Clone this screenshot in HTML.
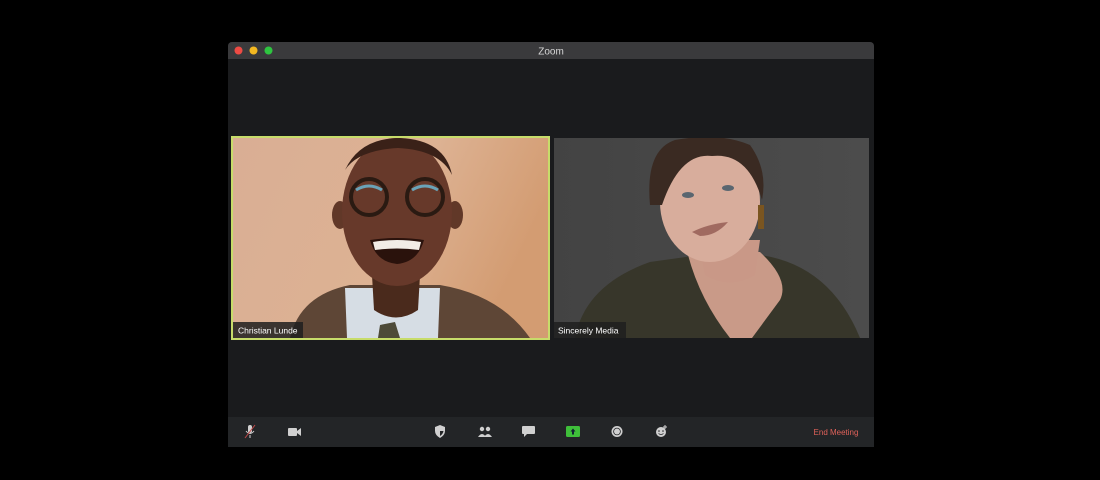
<!DOCTYPE html>
<html><head><meta charset="utf-8"><style>
html,body{margin:0;padding:0;background:#000;width:1100px;height:480px;overflow:hidden;font-family:"Liberation Sans",sans-serif}
</style></head><body>
<svg width="1100" height="480" viewBox="0 0 1100 480" xmlns="http://www.w3.org/2000/svg" style="position:absolute;left:0;top:0">
<defs>
<linearGradient id="wall" x1="0" y1="0" x2="1" y2="0.3"><stop offset="0" stop-color="#d9ae94"/><stop offset="0.6" stop-color="#ddb293"/><stop offset="1" stop-color="#d39c72"/></linearGradient>
<linearGradient id="gray" x1="0" y1="0" x2="1" y2="0"><stop offset="0" stop-color="#434343"/><stop offset="1" stop-color="#4c4c4c"/></linearGradient>
<clipPath id="cl"><rect x="233" y="138" width="315" height="200"/></clipPath>
<clipPath id="cr"><rect x="554" y="138" width="315" height="200"/></clipPath>
</defs>
<rect x="228" y="42" width="646" height="405" rx="4" fill="#1a1b1d"/>
<path d="M232 42 H870 a4 4 0 0 1 4 4 V59 H228 V46 a4 4 0 0 1 4-4z" fill="#3a3a3c"/>
<circle cx="238.5" cy="50.5" r="4" fill="#ee4b44"/>
<circle cx="253.5" cy="50.5" r="4" fill="#f3b821"/>
<circle cx="268.5" cy="50.5" r="4" fill="#2ec540"/>
<text x="551" y="54.5" fill="#d8d8d8" font-size="10" text-anchor="middle" font-family="Liberation Sans">Zoom</text>
<rect x="228" y="417" width="646" height="30" fill="#232527"/>

<g clip-path="url(#cl)">
<rect x="233" y="138" width="315" height="200" fill="url(#wall)"/>
<path d="M290 338 Q300 295 350 285 L440 285 Q500 295 530 338Z" fill="#5e4636"/>
<path d="M345 288 L440 288 L438 338 L347 338Z" fill="#d6dde4"/>
<path d="M380 325 L395 322 L400 338 L378 338Z" fill="#4d4a38"/>
<path d="M372 275 L420 275 L418 310 Q396 325 374 310Z" fill="#4a2a1c"/>
<ellipse cx="340" cy="215" rx="8" ry="14" fill="#613828"/>
<ellipse cx="455" cy="215" rx="8" ry="14" fill="#613828"/>
<ellipse cx="397" cy="212" rx="55" ry="74" fill="#67392a"/>
<path d="M345 170 Q360 138 400 138 Q445 140 452 175 Q440 150 398 148 Q358 150 345 170Z" fill="#3a2118"/>
<circle cx="369" cy="197" r="18" fill="none" stroke="#2a1a12" stroke-width="4"/>
<circle cx="425" cy="197" r="18" fill="none" stroke="#2a1a12" stroke-width="4"/>
<path d="M356 190 Q369 182 382 190" stroke="#6aa3b8" stroke-width="3" fill="none"/>
<path d="M412 190 Q425 182 438 190" stroke="#6aa3b8" stroke-width="3" fill="none"/>
<path d="M370 240 Q397 236 424 240 Q418 262 397 264 Q376 262 370 240Z" fill="#2a120c"/>
<path d="M373 242 Q397 238 421 242 L419 250 Q397 247 375 250Z" fill="#f2ece6"/>
</g>
<rect x="232" y="137" width="317" height="202" fill="none" stroke="#c7dc6a" stroke-width="2"/>
<rect x="233" y="322" width="70" height="16" fill="#1e1e1e" opacity="0.85"/>
<text x="238" y="333.5" fill="#fff" font-size="8.5" font-family="Liberation Sans">Christian Lunde</text>

<g clip-path="url(#cr)">
<rect x="554" y="138" width="315" height="200" fill="url(#gray)"/>
<path d="M575 338 Q585 285 650 262 L700 255 L760 255 Q830 265 860 338Z" fill="#37362a"/>
<path d="M688 255 Q700 250 760 252 Q790 280 780 300 L752 338 L730 338 Q700 300 688 255Z" fill="#c99a88"/>
<path d="M698 240 L760 240 L755 275 Q730 290 705 275Z" fill="#c99887"/>
<ellipse cx="710" cy="202" rx="50" ry="60" fill="#d8ad9c"/>
<path d="M650 205 Q645 150 675 140 Q720 132 750 145 Q768 170 762 200 Q748 152 712 156 Q680 152 662 205Z" fill="#3a2a22"/>
<rect x="758" y="205" width="6" height="24" fill="#7a5520"/>
<path d="M692 232 Q708 224 728 222 Q716 236 700 236Z" fill="#a06a60"/>
<ellipse cx="688" cy="195" rx="6" ry="3" fill="#5a6670"/>
<ellipse cx="728" cy="188" rx="6" ry="3" fill="#5a6670"/>
</g>
<rect x="554" y="322" width="72" height="16" fill="#1e1e1e" opacity="0.85"/>
<text x="558" y="333.5" fill="#fff" font-size="8.5" font-family="Liberation Sans">Sincerely Media</text>

<g fill="#d0d0d0">
<rect x="248" y="425" width="4" height="8" rx="2"/>
<path d="M246 431 q4 5 8 0" stroke="#d0d0d0" fill="none"/>
<rect x="249.5" y="435" width="1" height="3"/>
<line x1="245" y1="438" x2="255" y2="425" stroke="#c04848" stroke-width="1"/>
<rect x="288" y="428" width="9" height="8" rx="1"/>
<path d="M297 431 l4-3 v8 l-4-3z"/>
<path d="M440 425 l5 2 v4 q0 4 -5 7 q-5 -3 -5 -7 v-4z"/>
<path d="M440 427 v9 q3-2 3.5-5 h-3.5z" fill="#232527"/>
<circle cx="482" cy="429" r="2.2"/><circle cx="488" cy="429" r="2.2"/>
<path d="M478 437 q4-6 8 0z M484 437 q4-6 8 0z"/>
<path d="M523 426 h11 a1 1 0 0 1 1 1 v6 a1 1 0 0 1 -1 1 h-7 l-3 3 v-3 h-1 a1 1 0 0 1 -1 -1 v-6 a1 1 0 0 1 1-1z"/>
<circle cx="617" cy="431.5" r="5.5"/><circle cx="617" cy="431.5" r="3.8" fill="#232527"/><circle cx="617" cy="431.5" r="3" fill="#d0d0d0"/>
<circle cx="661" cy="432" r="5"/>
<circle cx="659" cy="431" r=".8" fill="#232527"/><circle cx="663" cy="431" r=".8" fill="#232527"/>
<path d="M658.5 433.5 q2.5 2 5 0" stroke="#232527" fill="none" stroke-width=".8"/>
<path d="M665 425 v4 M663 427 h4" stroke="#d0d0d0" stroke-width="1"/>
</g>
<rect x="566" y="426" width="14" height="11" rx="1.5" fill="#3fbf3a"/>
<path d="M573 428.5 l-2.5 3 h1.5 v3 h2 v-3 h1.5z" fill="#123"/>
<text x="836" y="435" fill="#e0625a" font-size="8" text-anchor="middle" font-family="Liberation Sans">End Meeting</text>
</svg>
</body></html>
